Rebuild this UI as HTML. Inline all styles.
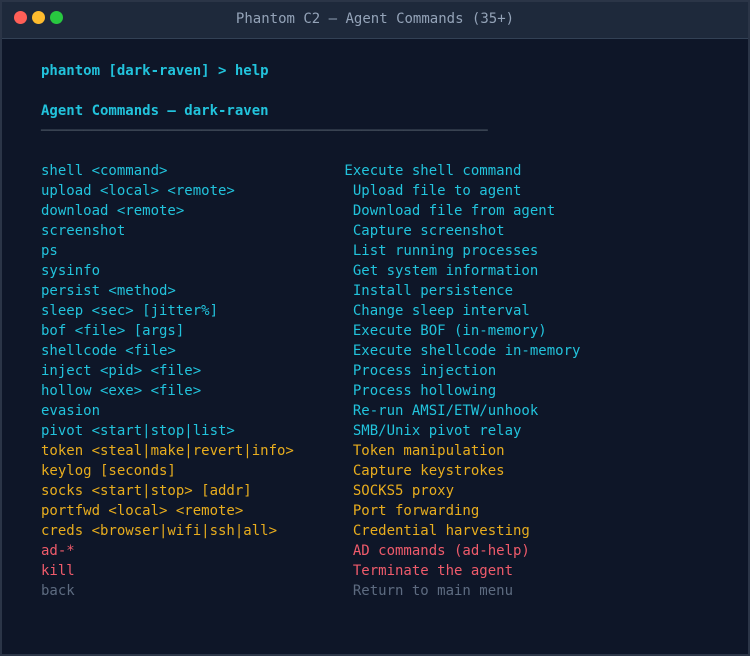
<!DOCTYPE html>
<html><head><style>
html,body{margin:0;padding:0;width:750px;height:656px;background:#1b2333;overflow:hidden}
.win{position:absolute;left:0;top:0;width:746px;height:652px;border:2px solid #2b3547;background:#0e1628}
.bar{position:absolute;left:0;top:0;width:746px;height:36px;background:#1e293b;border-bottom:1px solid #334155}
.dot{position:absolute;top:9px;width:13px;height:13px;border-radius:50%}
.title{position:absolute;top:0;left:0;width:746px;text-align:center;font:14px "DejaVu Sans Mono","Liberation Mono",monospace;line-height:34px;color:#94a3b8}
pre{position:absolute;left:39px;top:59px;margin:0;font:14px/20px "DejaVu Sans Mono","Liberation Mono",monospace;color:#22c3dc;white-space:pre}
b{font-weight:bold}
.o{color:#e8ad1e}.r{color:#ef5b6b}.g{color:#5d6b80}.s{color:#4b5563}
</style></head><body>
<div class="win">
<div class="bar">
<div class="dot" style="left:12px;background:#ff5f57"></div>
<div class="dot" style="left:30px;background:#febc2e"></div>
<div class="dot" style="left:48px;background:#28c840"></div>
<div class="title">Phantom C2 — Agent Commands (35+)</div>
</div>
<pre><b>phantom [dark-raven] &gt; help</b>

<b>Agent Commands — dark-raven</b>
<span class="s">─────────────────────────────────────────────────────</span>

shell &lt;command&gt;                     Execute shell command
upload &lt;local&gt; &lt;remote&gt;              Upload file to agent
download &lt;remote&gt;                    Download file from agent
screenshot                           Capture screenshot
ps                                   List running processes
sysinfo                              Get system information
persist &lt;method&gt;                     Install persistence
sleep &lt;sec&gt; [jitter%]                Change sleep interval
bof &lt;file&gt; [args]                    Execute BOF (in-memory)
shellcode &lt;file&gt;                     Execute shellcode in-memory
inject &lt;pid&gt; &lt;file&gt;                  Process injection
hollow &lt;exe&gt; &lt;file&gt;                  Process hollowing
evasion                              Re-run AMSI/ETW/unhook
pivot &lt;start|stop|list&gt;              SMB/Unix pivot relay
<span class="o">token &lt;steal|make|revert|info&gt;       Token manipulation
keylog [seconds]                     Capture keystrokes
socks &lt;start|stop&gt; [addr]            SOCKS5 proxy
portfwd &lt;local&gt; &lt;remote&gt;             Port forwarding
creds &lt;browser|wifi|ssh|all&gt;         Credential harvesting</span>
<span class="r">ad-*                                 AD commands (ad-help)
kill                                 Terminate the agent</span>
<span class="g">back                                 Return to main menu</span></pre>
</div>
</body></html>
